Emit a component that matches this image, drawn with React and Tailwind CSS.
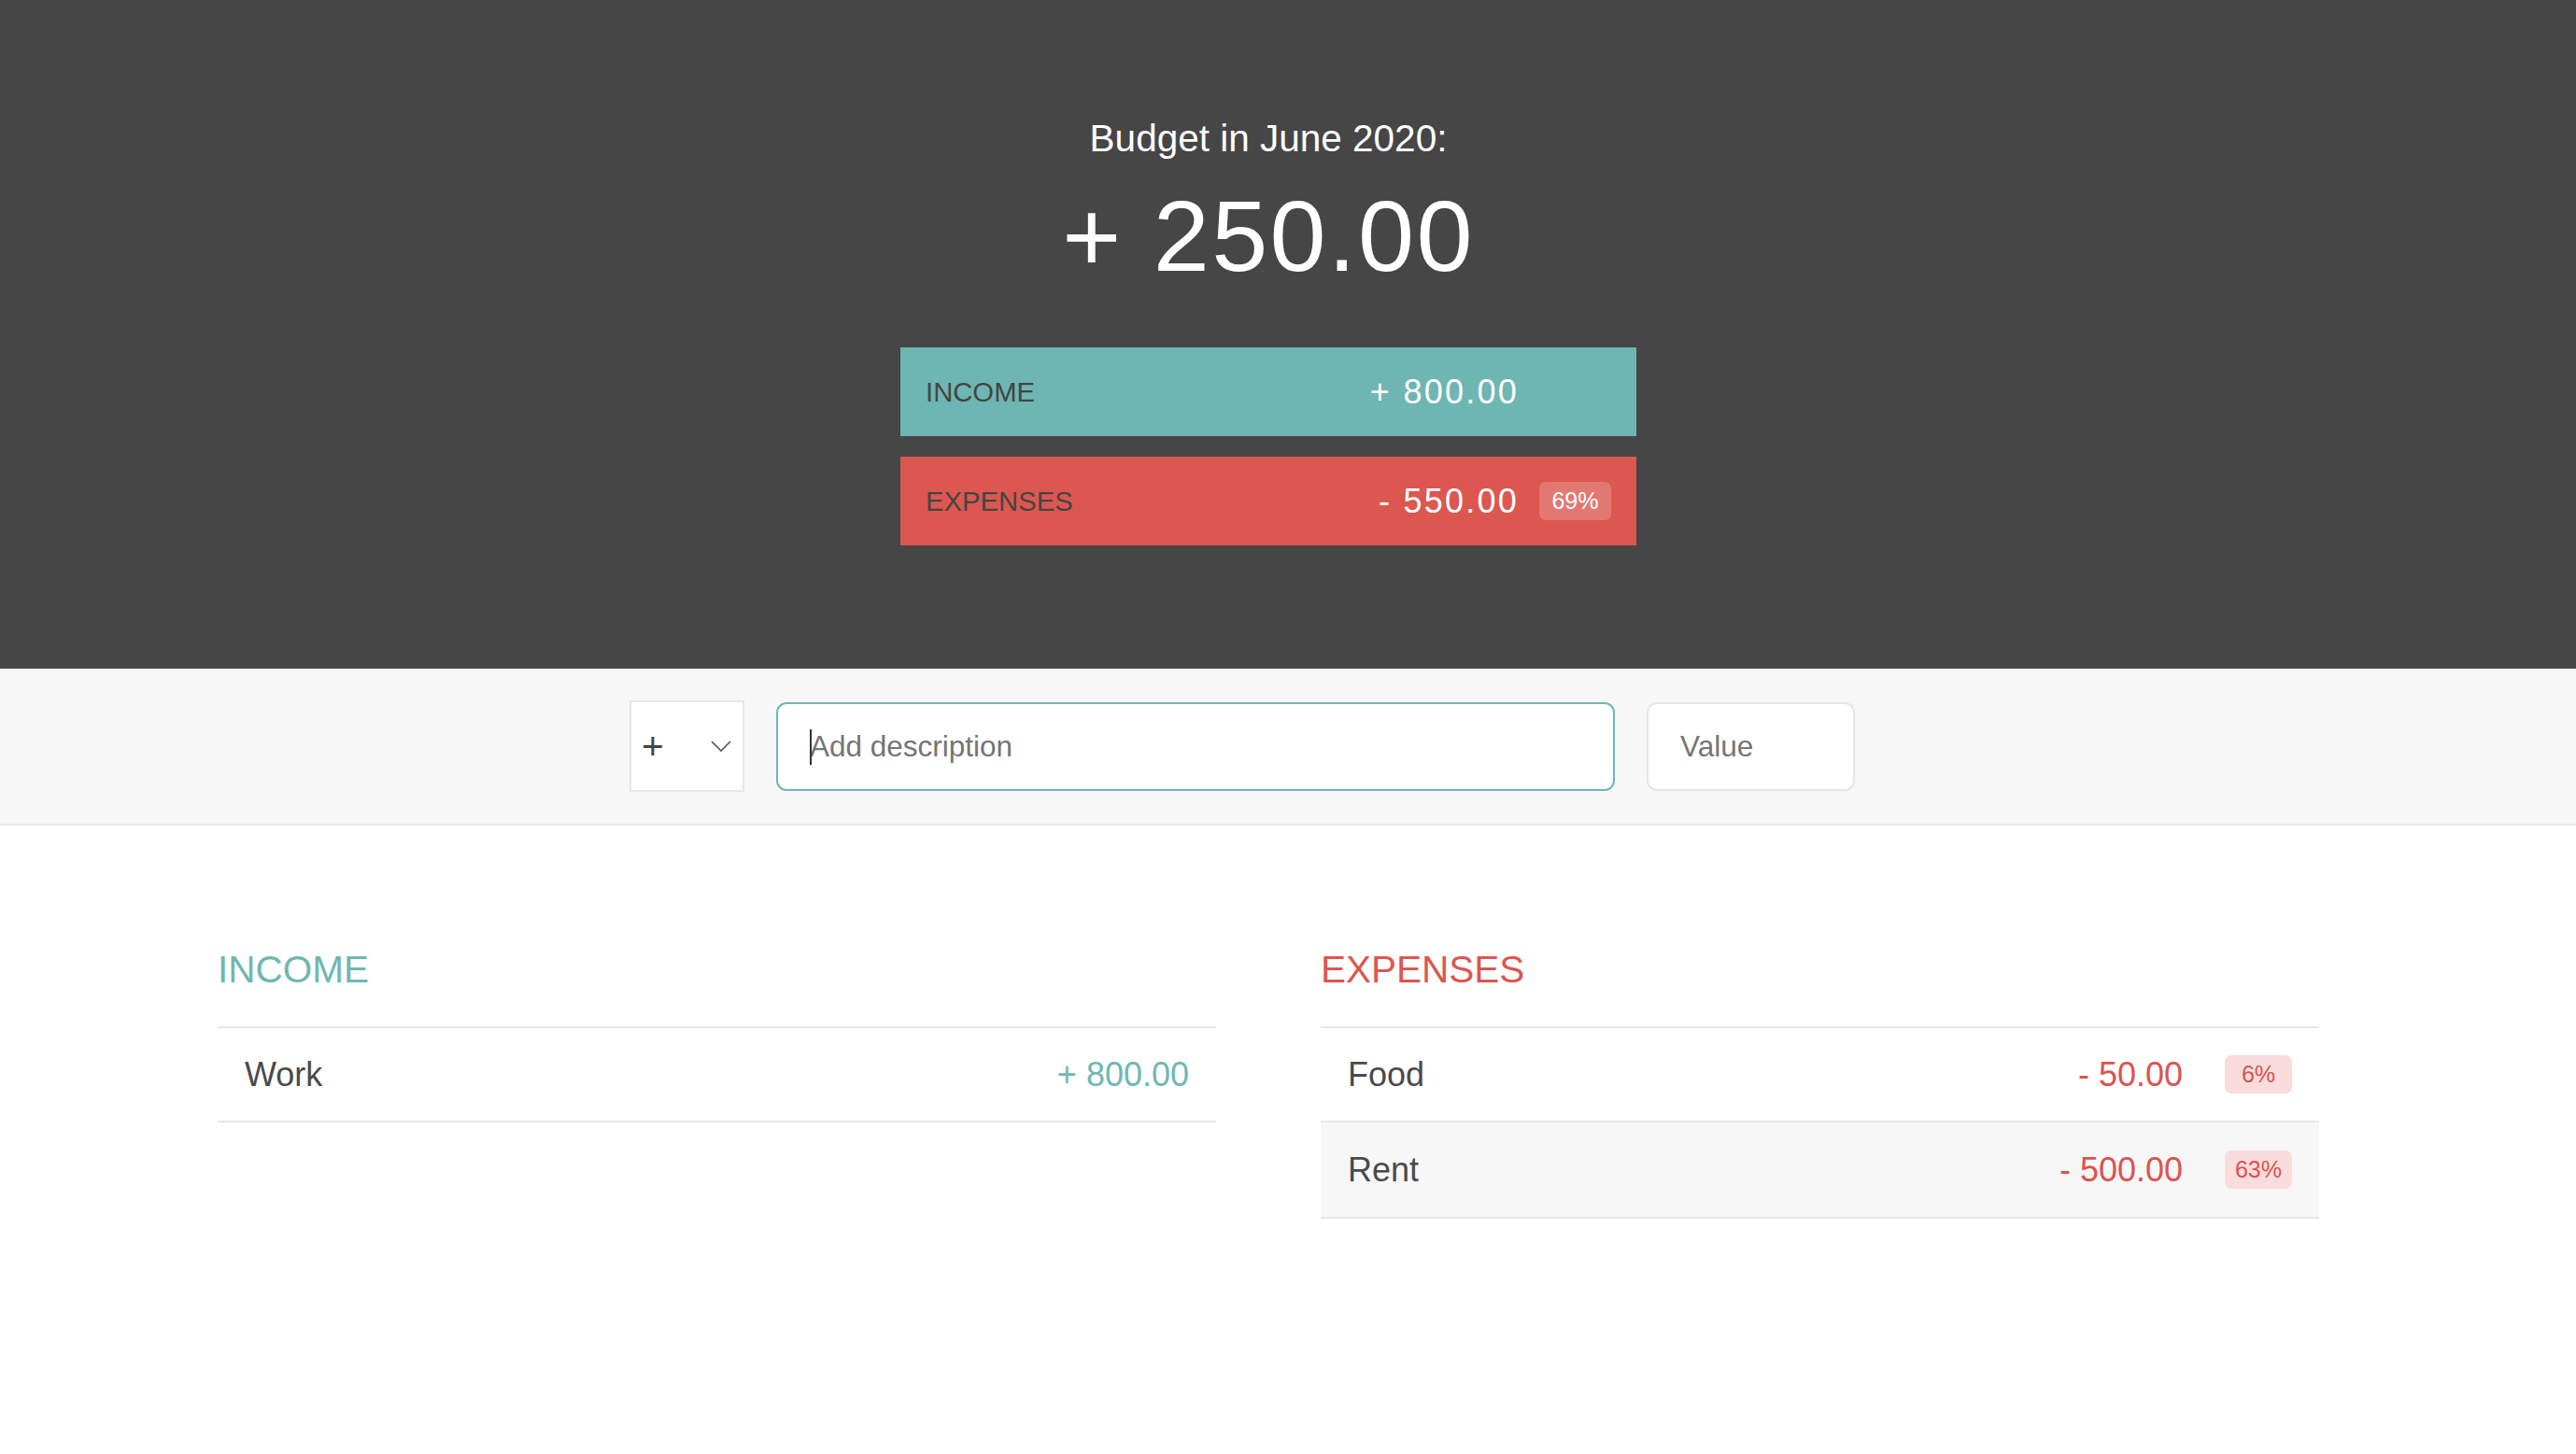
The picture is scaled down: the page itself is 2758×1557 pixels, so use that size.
import React from "react";

const incomeItems = [{ id: 1, description: "Work", value: "+ 800.00" }];

const expenseItems = [
  { id: 1, description: "Food", value: "- 50.00", percentage: "6%" },
  { id: 2, description: "Rent", value: "- 500.00", percentage: "63%" },
];

function SummaryBar({ label, value, percentage, className }) {
  return (
    <div className={`flex h-[95px] w-[788px] items-center justify-between px-[27px] ${className}`}>
      <span className="mt-[2px] text-[29.25px] uppercase text-[#444]">{label}</span>
      <div className="flex items-center">
        <span className="text-[36px] leading-[41px] tracking-[2.25px] text-white">{value}</span>
        <span
          className={`ml-[22px] flex h-[41px] w-[77px] items-center justify-center rounded-[7px] text-[25px] text-white ${
            percentage ? "bg-white/20" : ""
          }`}
        >
          {percentage}
        </span>
      </div>
    </div>
  );
}

function ItemRow({ item, type, even, first }) {
  return (
    <div
      className={`flex h-[103px] items-center justify-between border-b-2 border-[#e7e7e7] px-[29px] ${
        first ? "border-t-2" : ""
      } ${even ? "bg-[#f7f7f7]" : "bg-white"}`}
    >
      <span className="text-[36px] text-[#4a4a4a]">{item.description}</span>
      <div className="flex items-center">
        <span className={`text-[36px] ${type === "inc" ? "text-[#6fb7b4]" : "text-[#db5450]"}`}>
          {item.value}
        </span>
        {item.percentage && (
          <span className="ml-[45px] flex h-[41px] w-[72px] items-center justify-center rounded-[7px] bg-[#f9dcdb] text-[25px] text-[#d9534f]">
            {item.percentage}
          </span>
        )}
      </div>
    </div>
  );
}

export default function App() {
  return (
    <div className="min-h-screen bg-white font-['Liberation_Sans',Arial,sans-serif]">
      {/* top: budget summary */}
      <header className="h-[716px] bg-[#464646]">
        <div className="flex flex-col items-center pr-[42px] pt-[125px] text-white">
          <div className="text-[40.5px] leading-[46px]">Budget in June 2020:</div>
          <div className="mt-[20px] text-[108px] leading-[124px] tracking-[2.25px]">+ 250.00</div>
          <div className="mt-[57px] flex flex-col gap-[22px]">
            <SummaryBar label="Income" value="+ 800.00" className="bg-[#6eb6b3]" />
            <SummaryBar label="Expenses" value="- 550.00" percentage="69%" className="bg-[#dc5750]" />
          </div>
        </div>
      </header>

      {/* add item */}
      <div className="box-border flex h-[168px] items-center justify-center border-b-2 border-[#e7e7e7] bg-[#f7f7f7] pr-[42px]">
        <div className="flex items-center gap-[34px]">
          <div className="flex h-[98px] w-[123px] items-center justify-between border-2 border-[#e7e7e7] bg-white pl-[11px] pr-[12px]">
            <span className="text-[40.5px] leading-none text-[#444]">+</span>
            <svg width="22" height="12" viewBox="0 0 22 12" fill="none" stroke="#555" strokeWidth="1.6">
              <polyline points="1,1 11,11 21,1" />
            </svg>
          </div>
          <div className="relative">
            <input
              type="text"
              placeholder="Add description"
              className="h-[95px] w-[898px] rounded-[11px] border-2 border-[#6fb7b4] bg-white pl-[34px] text-[31.5px] text-[#555] outline-none placeholder:text-[#757575]"
            />
            {/* focus caret */}
            <span className="pointer-events-none absolute left-[36px] top-[29px] h-[38px] w-[2px] bg-[#333]" />
          </div>
          <input
            type="text"
            placeholder="Value"
            className="h-[95px] w-[223px] rounded-[11px] border-2 border-[#e7e7e7] bg-white pl-[34px] text-[31.5px] text-[#555] outline-none placeholder:text-[#757575]"
          />
          <div className="w-[22px]" />
        </div>
      </div>

      {/* lists */}
      <div className="flex justify-center pr-[42px] pt-[131px]">
        <div className="flex w-[2250px] gap-[112px]">
          <div className="w-[1069px]">
            <h2 className="mb-[38px] h-[46px] text-[40.5px] leading-[46px] uppercase text-[#6fb7b4]">Income</h2>
            {incomeItems.map((item, i) => (
              <ItemRow key={item.id} item={item} type="inc" first={i === 0} even={i % 2 === 1} />
            ))}
          </div>
          <div className="w-[1069px]">
            <h2 className="mb-[38px] h-[46px] text-[40.5px] leading-[46px] uppercase text-[#dc5650]">Expenses</h2>
            {expenseItems.map((item, i) => (
              <ItemRow key={item.id} item={item} type="exp" first={i === 0} even={i % 2 === 1} />
            ))}
          </div>
        </div>
      </div>
    </div>
  );
}
